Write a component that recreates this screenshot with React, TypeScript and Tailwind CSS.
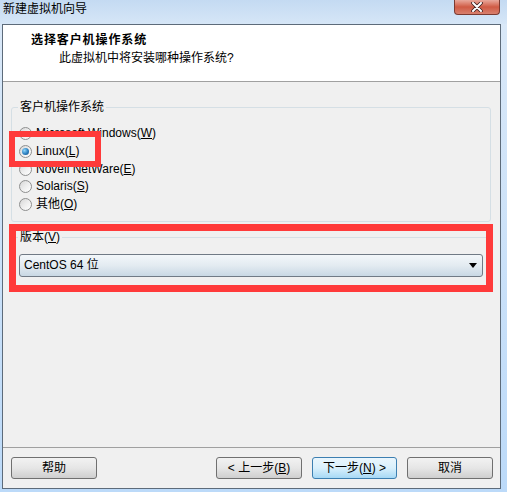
import React from "react";

const font = { fontFamily: '"Liberation Sans", "Noto Sans CJK SC", sans-serif' };

function Radio({ checked, label }: { checked?: boolean; label: React.ReactNode }) {
  return (
    <div className="flex items-center h-[17.7px] pl-[7px]">
      <div className="w-[13px] h-[13px] rounded-full border border-[#8e8f8f] bg-gradient-to-br from-[#d6d6d6] via-[#eeeeee] to-[#ffffff] flex items-center justify-center">
        {checked && (
          <div className="w-[7px] h-[7px] rounded-full bg-[radial-gradient(circle_at_35%_35%,#8fd6fb,#2a7fc0_55%,#1a4f80)]" />
        )}
      </div>
      <span className="ml-[4px] text-[12px] leading-[15px] text-black">{label}</span>
    </div>
  );
}

function Button({ children, primary }: { children: React.ReactNode; primary?: boolean }) {
  return (
    <button
      className={
        primary
          ? "w-[85px] h-[22px] rounded-[3px] border border-[#3c7fb1] bg-gradient-to-b from-[#eaf6fd] via-[#d9f0fc] to-[#a7d9f5] text-[12px] leading-[15px] text-black"
          : "w-[86px] h-[22px] rounded-[3px] border border-[#707070] bg-gradient-to-b from-[#f2f2f2] via-[#e6e6e6] to-[#cfcfcf] text-[12px] leading-[15px] text-black"
      }
    >
      {children}
    </button>
  );
}

export default function App() {
  return (
    <div
      className="relative w-[507px] h-[492px] overflow-hidden bg-gradient-to-b from-[#dbe9f8] to-[#bcdaf9]"
      style={font}
    >
      {/* title bar */}
      <div className="h-[24px] flex items-start justify-between bg-gradient-to-b from-[#c4daf2] to-[#d6e6f7]">
        <span className="pl-[3px] pt-[2px] text-[12px] leading-[15px] text-black">新建虚拟机向导</span>
        <div className="mr-[7px] w-[46px] h-[15px] rounded-b-[4px] border border-t-0 border-[#7b3a31] bg-gradient-to-b from-[#e8a89c] via-[#cf5a44] to-[#d8806e] flex items-center justify-center">
          <svg width="12" height="10" viewBox="0 0 12 10">
            <path d="M2 1 L10 9 M10 1 L2 9" stroke="#3d2020" strokeWidth="3.6" strokeLinecap="round" />
            <path d="M2 1 L10 9 M10 1 L2 9" stroke="#ffffff" strokeWidth="2" strokeLinecap="round" />
          </svg>
        </div>
      </div>

      {/* window */}
      <div className="ml-[2px] w-[499px] border border-[#5d6b7a] bg-[#f0f0f0]">
        {/* header */}
        <div className="h-[57px] bg-white border-b border-[#a0a0a0] pt-[8px]">
          <div className="pl-[28px] text-[12px] leading-[15px] font-bold tracking-[0.9px] text-black">
            选择客户机操作系统
          </div>
          <div className="pl-[56px] pt-[3px] text-[12px] leading-[15px] text-black">
            此虚拟机中将安装哪种操作系统?
          </div>
        </div>

        {/* body */}
        <div className="h-[365px] pt-[25px]">
          <div className="relative ml-[8px] w-[480px] h-[115px] rounded-[3px] border border-[#d5dfe5] pt-[17px]">
            <span className="absolute -top-[8px] left-[6px] bg-[#f0f0f0] px-[2px] text-[12px] leading-[15px]">
              客户机操作系统
            </span>
            <Radio label={<>Microsoft Windows(<span className="underline">W</span>)</>} />
            <Radio checked label={<>Linux(<span className="underline">L</span>)</>} />
            <Radio label={<>Novell NetWare(<span className="underline">E</span>)</>} />
            <Radio label={<>Solaris(<span className="underline">S</span>)</>} />
            <Radio label={<>其他(<span className="underline">O</span>)</>} />
          </div>

          <div className="relative mt-[15px] ml-[8px] w-[480px] h-[52px] rounded-[3px] border border-[#d5dfe5] pt-[16px]">
            <span className="absolute -top-[8px] left-[6px] bg-[#f0f0f0] px-[2px] text-[12px] leading-[15px]">
              版本(<span className="underline">V</span>)
            </span>
            <div className="ml-[7px] w-[464px] h-[23px] rounded-[3px] border border-[#707a85] bg-gradient-to-b from-[#f3f7fa] via-[#e3ebf1] to-[#c9d8e4] flex items-center justify-between pl-[4px] pr-[5px]">
              <span className="text-[12px] leading-[15px] text-black">CentOS 64 位</span>
              <svg width="8" height="5" viewBox="0 0 8 5">
                <path d="M0 0 H8 L4 5 Z" fill="#000" />
              </svg>
            </div>
          </div>
        </div>

        {/* footer */}
        <div className="h-[41px] border-t border-[#a0a0a0] flex items-start justify-between pt-[9px] pl-[8px] pr-[7px]">
          <Button>帮助</Button>
          <div className="flex gap-[10px]">
            <Button>
              &lt; 上一步(<span className="underline">B</span>)
            </Button>
            <Button primary>
              下一步(<span className="underline">N</span>) &gt;
            </Button>
            <Button>取消</Button>
          </div>
        </div>
      </div>

      {/* red annotation boxes */}
      <div className="absolute left-[9px] top-[131px] w-[92px] h-[36px] border-[6px] border-[#ff3a3a]" />
      <div className="absolute left-[9px] top-[224px] w-[484px] h-[68px] border-[7px] border-[#ff3a3a]" />
    </div>
  );
}
